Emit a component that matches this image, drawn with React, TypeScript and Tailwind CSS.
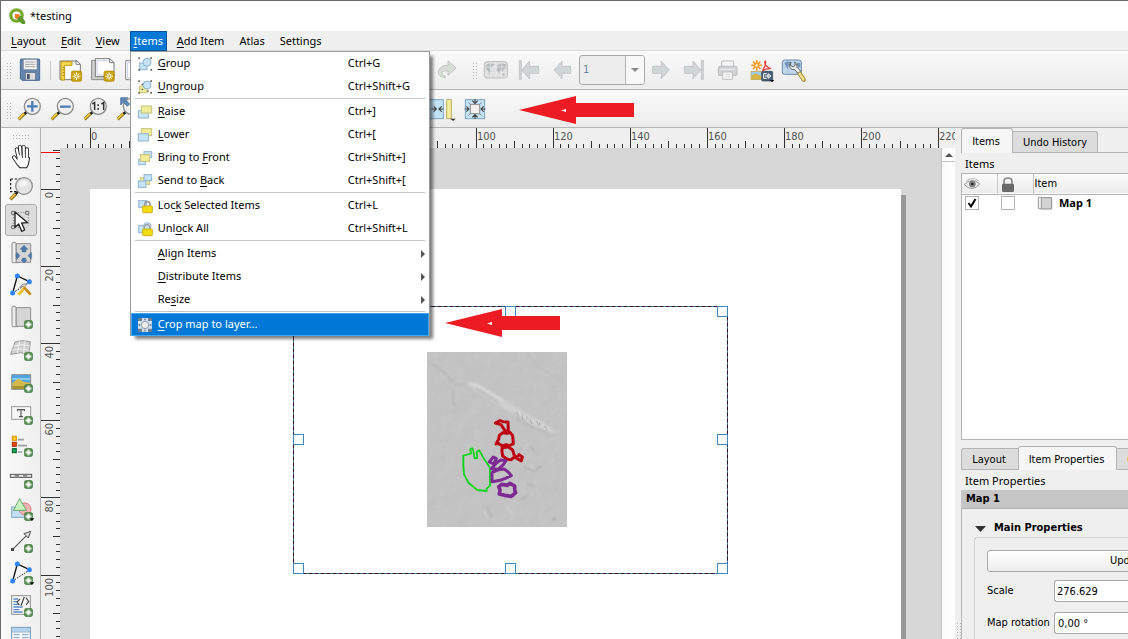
import React from "react";

type Kids = { children?: React.ReactNode };

function Icon({ box, className = "size-6", children }: { box: string; className?: string } & Kids) {
  return (
    <svg viewBox={box} className={`${className} block shrink-0 overflow-visible`} fill="none" aria-hidden="true">
      {children}
    </svg>
  );
}

/* ---------- shared glyph parts ---------- */

function Plus({ x, y }: { x: number; y: number }) {
  return (
    <g transform={`translate(${x} ${y})`}>
      <rect x="1.5" y="1.5" width="24" height="24" rx="5" fill="#5a8f55" stroke="#3f7a3d" strokeWidth="2" />
      <path d="M13.5 5v17M5 13.5h17" stroke="#fff" strokeWidth="6" />
    </g>
  );
}

function Star({ x, y }: { x: number; y: number }) {
  return (
    <g transform={`translate(${x} ${y})`}>
      <rect width="31" height="31" rx="5" fill="#c8a20a" stroke="#b08c00" strokeWidth="2" />
      <path d="M15.500 4v23M4 15.500h23M7.500 7.500l16 16M23.500 7.500l-16 16" stroke="#fff" strokeWidth="3" />
      <circle cx="15.500" cy="15.500" r="4" fill="#c8a20a" stroke="#fff" strokeWidth="2" />
    </g>
  );
}

function Lens({ cx, cy, r = 24 }: { cx: number; cy: number; r?: number }) {
  return (
    <g>
      <path d={`M${cx - 17} ${cy + 17}L${cx - 25} ${cy + 24}`} stroke="#222" strokeWidth="8" />
      <path d={`M${cx - 24} ${cy + 22}L${cx - 41} ${cy + 39}`} stroke="#8a6a10" strokeWidth="9" />
      <path d={`M${cx - 25} ${cy + 22}L${cx - 41} ${cy + 38}`} stroke="#f6cf3c" strokeWidth="5" />
      <circle cx={cx} cy={cy} r={r} fill="#f1f1f1" stroke="#8d8d8d" strokeWidth="4" />
    </g>
  );
}

function SheetScroll({ y }: { y: number }) {
  return (
    <g>
      <path d={`M48 ${y + 5}h44v56h-44z`} fill="#d6d6d6" stroke="#8f8f8f" strokeWidth="3" />
      <path d={`M36 ${y + 3}q6-5 12 0v56q2 3 6 3h-16q-2 0-2-4z`} fill="#ececec" stroke="#8f8f8f" strokeWidth="3" />
    </g>
  );
}

/* ---------- left tool box ---------- */

const fingers = "M58 90L50 58M63 90L60 51M72 90L71 51M81 92L81 58M56 102L42 82";
const palm = "M53 84h34l-3 18-5 10h-19l-9-13z";

const leftTools: { name: string; active?: boolean; icon: React.ReactNode }[] = [
  {
    name: "Pan Layout",
    icon: (
      <Icon box="27 42 72 72">
        <path d={fingers} stroke="#222" strokeWidth="12" strokeLinecap="round" />
        <path d={palm} fill="#fff" stroke="#222" strokeWidth="6" strokeLinejoin="round" />
        <path d={fingers} stroke="#fff" strokeWidth="7" strokeLinecap="round" />
        <path d={palm} fill="#fff" />
        <path d="M65.500 56v20M76 58v18M56 62l3 14" stroke="#555" strokeWidth="2.500" />
      </Icon>
    ),
  },
  {
    name: "Zoom",
    icon: (
      <Icon box="27 138 72 72">
        <path d="M32 147h40M32 147v38h20" stroke="#111" strokeWidth="3.500" strokeDasharray="7 5" />
        <path d="M54 185l-10 10" stroke="#222" strokeWidth="8" />
        <path d="M47 192l-16 16" stroke="#8a6a10" strokeWidth="10" />
        <path d="M46 192l-14 14" stroke="#f6c53c" strokeWidth="5" />
        <circle cx="72" cy="168" r="25" fill="#e2e2e2" fillOpacity=".94" stroke="#8d8d8d" strokeWidth="4" />
        <path d="M55 164q6-15 24-11 8 10-4 16-14 6-20-5z" fill="#f6f6f6" />
      </Icon>
    ),
  },
  {
    name: "Select/Move Item",
    active: true,
    icon: (
      <Icon box="27 234 72 72">
        <path d="M46 248h34M40 254v34M86 254v34M46 292h34" stroke="#777" strokeWidth="3" strokeDasharray="3 5" />
        <g fill="#ddd" stroke="#555" strokeWidth="2.500">
          <path d="M35 244h9v9h-9zM77 244h9v9h-9zM35 287h9v9h-9z" />
        </g>
        <path d="M45 246v46l11-10 9 22 9-4-9-21 18-1z" fill="#fff" stroke="#222" strokeWidth="4" strokeLinejoin="round" />
      </Icon>
    ),
  },
  {
    name: "Move Item Content",
    icon: (
      <Icon box="27 330 72 72">
        <SheetScroll y={336} />
        <path
          d="M72 346l12 12h-6v8h-12v-8h-6zM72 399l-9-9h4v-6h10v6h4zM50 366l10 11-10 11v-6h-2v-10h2zM94 366l-10 11 10 11v-6h1v-10h-1z"
          fill="#5079ad"
          stroke="#33567f"
          strokeWidth="1"
        />
      </Icon>
    ),
  },
  {
    name: "Edit Nodes Item",
    icon: (
      <Icon box="27 426 72 72">
        <path d="M38 489l14-51 36 17" stroke="#111" strokeWidth="4" />
        <path d="M38 489l46-30" stroke="#111" strokeWidth="3" strokeDasharray="5 4" />
        <circle cx="52" cy="438" r="7.500" fill="#2f84f5" />
        <circle cx="88" cy="455" r="7.500" fill="#2f84f5" />
        <circle cx="38" cy="489" r="7.500" fill="#2f84f5" />
        <path d="M60 470q8-12 22-8l-8 8q-8-2-14 4z" fill="#ddd" stroke="#888" strokeWidth="3" />
        <path d="M76 472l-21 22" stroke="#efc233" strokeWidth="9" />
        <path d="M72 472l20 22" stroke="#c98a12" strokeWidth="8" />
      </Icon>
    ),
  },
  {
    name: "Add Map",
    icon: (
      <Icon box="27 522 72 72">
        <SheetScroll y={528} />
        <Plus x={72} y={570} />
      </Icon>
    ),
  },
  {
    name: "Add 3D Map",
    icon: (
      <Icon box="27 618 72 72">
        <path d="M45 636q20-8 46-1l-4 37q-26-8-55 1z" fill="#cfcfcf" stroke="#9a9a9a" strokeWidth="3" />
        <path d="M40 648q22-8 50 0M36 661q22-8 52 0M60 632l-8 37M75 632l-4 37" stroke="#efefef" strokeWidth="3" />
        <Plus x={72} y={666} />
      </Icon>
    ),
  },
  {
    name: "Add Picture",
    icon: (
      <Icon box="27 714 72 72">
        <path d="M35 734h57v44h-57z" fill="#4fa6e6" stroke="#8f8f8f" strokeWidth="3" />
        <path d="M37 750h53v-6h-53z" fill="#8fcaf0" />
        <path d="M37 758l18-12 16 9 19 3v19h-53z" fill="#d3b94c" />
        <path d="M37 768h53v9h-53z" fill="#a8922e" />
        <Plus x={72} y={762} />
      </Icon>
    ),
  },
  {
    name: "Add Label",
    icon: (
      <Icon box="27 45 72 72">
        <rect x="35" y="65" width="57" height="38" fill="#f7f7f7" stroke="#9a9a9a" strokeWidth="3" />
        <path d="M53 79v-5h20v5M63 74v21M57 95h12" stroke="#555" strokeWidth="3.500" />
        <Plus x={72} y={93} />
      </Icon>
    ),
  },
  {
    name: "Add Legend",
    icon: (
      <Icon box="27 141 72 72">
        <rect x="37" y="154" width="12" height="12" fill="#ffd21c" stroke="#e68a00" strokeWidth="3" />
        <rect x="37" y="172" width="12" height="12" fill="#f4460c" stroke="#a82f00" strokeWidth="3" />
        <rect x="37" y="191" width="12" height="12" fill="#0fae57" stroke="#06552a" strokeWidth="3" />
        <path d="M54 164h18M54 182h27M54 201h13" stroke="#a0a0a0" strokeWidth="5" />
        <Plus x={72} y={189} />
      </Icon>
    ),
  },
  {
    name: "Add Scale Bar",
    icon: (
      <Icon box="27 237 72 72">
        <rect x="31" y="268" width="64" height="9" fill="#e6e6e6" stroke="#555" strokeWidth="3" />
        <path d="M44 272.500h13M69 272.500h13" stroke="#888" strokeWidth="6" />
        <Plus x={72} y={285} />
      </Icon>
    ),
  },
  {
    name: "Add Shape",
    icon: (
      <Icon box="27 333 72 72">
        <rect x="35" y="366" width="40" height="31" fill="#c2def3" stroke="#7fa8c8" strokeWidth="3" />
        <circle cx="75" cy="372" r="18" fill="#f6b3b3" stroke="#de8080" strokeWidth="3" />
        <path d="M59 341l20 35h-39z" fill="#c7f5c0" stroke="#69a868" strokeWidth="3" />
        <Plus x={72} y={381} />
        <path d="M89 400h14l-7 8z" fill="#111" />
      </Icon>
    ),
  },
  {
    name: "Add Arrow",
    icon: (
      <Icon box="27 429 72 72">
        <path d="M38 493l42-42" stroke="#555" strokeWidth="3.500" />
        <path d="M92 439l-7 20-13-13z" fill="#ddd" stroke="#555" strokeWidth="3" />
        <rect x="33" y="489" width="9" height="9" fill="#444" />
        <Plus x={72} y={477} />
      </Icon>
    ),
  },
  {
    name: "Add Node Item",
    icon: (
      <Icon box="27 525 72 72">
        <path d="M38 588l14-51 36 17" stroke="#111" strokeWidth="4" />
        <path d="M38 588l46-30" stroke="#111" strokeWidth="3" strokeDasharray="4 4" />
        <circle cx="52" cy="537" r="7.500" fill="#2f84f5" />
        <circle cx="88" cy="554" r="7.500" fill="#2f84f5" />
        <circle cx="38" cy="588" r="7.500" fill="#2f84f5" />
        <Plus x={72} y={573} />
        <path d="M89 592h14l-7 8z" fill="#111" />
      </Icon>
    ),
  },
  {
    name: "Add HTML",
    icon: (
      <Icon box="27 621 72 72">
        <rect x="35" y="632" width="56" height="56" fill="#f6f6f6" stroke="#8f8f8f" strokeWidth="3" />
        <path d="M40 642h14M40 650h11M40 658h17M40 666h28M40 674h18M40 681h28" stroke="#5b8cc6" strokeWidth="4" />
        <path d="M60 642l-9 9 7 9M78 638l8 12-8 10M73 636l-10 26" stroke="#444" strokeWidth="3.500" />
        <Plus x={72} y={669} />
      </Icon>
    ),
  },
  {
    name: "Add Attribute Table",
    icon: (
      <Icon box="27 717 72 72">
        <rect x="35" y="727" width="56" height="50" fill="#f4f8fc" stroke="#6d94bb" strokeWidth="3" />
        <path d="M36 729h54v11h-54z" fill="#b6d3ec" />
        <path d="M35 741h56" stroke="#6d94bb" strokeWidth="2" />
        <path d="M41 749h18M66 749h20M41 758h18M66 758h20M41 767h18M66 767h20" stroke="#7ea6cf" strokeWidth="3" />
      </Icon>
    ),
  },
];

/* ---------- menu ---------- */

const blue = { fill: "#c6e4f7", stroke: "#8fb3cd", strokeWidth: 3 };
const yellow = { fill: "#f0ec9a", stroke: "#c6c17a", strokeWidth: 3 };

function Corners({ y }: { y: number }) {
  return <path d={`M31 ${y - 20}h5v5h-5zM67 ${y - 20}h5v5h-5zM31 ${y + 15}h5v5h-5zM67 ${y + 15}h5v5h-5z`} fill="#666" />;
}

type Entry = { before?: string; key: string; after: string; shortcut?: string; icon?: React.ReactNode; sub?: boolean; hot?: boolean };

const m = "size-4";
const menuGroups: Entry[][] = [
  [
    {
      key: "G",
      after: "roup",
      shortcut: "Ctrl+G",
      icon: (
        <Icon className={m} box="27 21 48 48">
          <rect x="35" y="42" width="22" height="20" {...blue} />
          <circle cx="57" cy="40" r="12" {...blue} />
          <Corners y={45} />
        </Icon>
      ),
    },
    {
      key: "U",
      after: "ngroup",
      shortcut: "Ctrl+Shift+G",
      icon: (
        <Icon className={m} box="27 90 48 48">
          <rect x="35" y="111" width="22" height="20" {...yellow} />
          <circle cx="57" cy="108" r="12" {...blue} />
          <Corners y={114} />
          <path d="M41 104h4v4h-4zM41 119h4v4h-4zM58 124h4v4h-4z" fill="#444" />
        </Icon>
      ),
    },
  ],
  [
    {
      key: "R",
      after: "aise",
      shortcut: "Ctrl+]",
      icon: (
        <Icon className={m} box="27 165 48 48">
          <rect x="31" y="185" width="30" height="22" {...blue} />
          <rect x="40" y="171" width="31" height="21" {...yellow} />
        </Icon>
      ),
    },
    {
      key: "L",
      after: "ower",
      shortcut: "Ctrl+[",
      icon: (
        <Icon className={m} box="27 234 48 48">
          <rect x="40" y="239" width="31" height="21" {...yellow} />
          <rect x="31" y="254" width="30" height="22" {...blue} />
        </Icon>
      ),
    },
    {
      before: "Bring to ",
      key: "F",
      after: "ront",
      shortcut: "Ctrl+Shift+]",
      icon: (
        <Icon className={m} box="27 303 48 48">
          <rect x="48" y="308" width="23" height="18" {...blue} />
          <rect x="32" y="331" width="20" height="16" {...blue} />
          <rect x="37" y="317" width="28" height="20" {...yellow} />
        </Icon>
      ),
    },
    {
      before: "Send to ",
      key: "B",
      after: "ack",
      shortcut: "Ctrl+Shift+[",
      icon: (
        <Icon className={m} box="27 372 48 48">
          <rect x="37" y="386" width="28" height="20" {...yellow} />
          <rect x="48" y="377" width="23" height="18" {...blue} />
          <rect x="31" y="396" width="23" height="19" {...blue} />
        </Icon>
      ),
    },
  ],
  [
    {
      before: "Loc",
      key: "k",
      after: " Selected Items",
      shortcut: "Ctrl+L",
      icon: (
        <Icon className={m} box="27 21 48 48">
          <rect x="32" y="29" width="24" height="20" {...blue} />
          <path d="M50 46v-6q0-8 8-8t8 8v6" stroke="#999" strokeWidth="5" />
          <rect x="44" y="45" width="29" height="20" rx="2" fill="#f2dc14" stroke="#c9a900" strokeWidth="2.500" />
        </Icon>
      ),
    },
    {
      before: "Unl",
      key: "o",
      after: "ck All",
      shortcut: "Ctrl+Shift+L",
      icon: (
        <Icon className={m} box="27 90 48 48">
          <rect x="32" y="103" width="20" height="22" {...blue} />
          <circle cx="58" cy="106" r="11" {...blue} />
          <path d="M48 112q2-12 10-11t9 14" stroke="#999" strokeWidth="4" />
          <rect x="44" y="114" width="29" height="20" rx="2" fill="#f2dc14" stroke="#c9a900" strokeWidth="2.500" />
        </Icon>
      ),
    },
  ],
  [
    { key: "A", after: "lign Items", sub: true },
    { key: "D", after: "istribute Items", sub: true },
    { before: "Re", key: "s", after: "ize", sub: true },
  ],
  [
    {
      key: "C",
      after: "rop map to layer...",
      hot: true,
      icon: (
        <Icon className={m} box="27 378 48 48">
          <rect x="30" y="381" width="42" height="42" fill="#cfe3f2" />
          <path d="M30 381h12v9h-12zM60 381h12v9h-12zM30 413h12v10h-12zM60 413h12v10h-12z" fill="#6f7f8c" />
          <path d="M47 383h8l-4 6zM47 421h8l-4-6zM32 397l6 5-6 5zM70 397l-6 5 6 5z" fill="#6f7f8c" />
          <circle cx="51" cy="402" r="11" fill="#ececec" stroke="#8f9aa5" strokeWidth="3" />
        </Icon>
      ),
    },
  ],
];

function Mnemonic({ before = "", k, after }: { before?: string; k: string; after: string }) {
  return (
    <span className="whitespace-pre">
      {before}
      <u className="underline underline-offset-2">{k}</u>
      {after}
    </span>
  );
}

function ItemsMenu() {
  return (
    <div role="menu" className="absolute top-full left-0 z-20 w-[300px] border border-b-0 border-[#999] bg-white text-black shadow-[4px_4px_3px_-1px_rgba(0,0,0,0.5)]">
      {menuGroups.map((group, i) => (
        <div key={i}>
          {i > 0 && <div className="mx-1 h-0.5 border-t border-[#c4c4c4]" />}
          {group.map((e) => (
            <button
              key={e.key + e.after}
              role="menuitem"
              className={
                e.hot
                  ? "flex h-[23px] w-full items-center bg-[#0078d7] pl-1.5 text-left text-white outline-1 -outline-offset-1 outline-[#42a5f5]"
                  : "flex h-[23px] w-full items-center pl-1.5 text-left"
              }
            >
              <span className="w-[21px] shrink-0">{e.icon}</span>
              <span className="w-[190px] shrink-0">
                <Mnemonic before={e.before} k={e.key} after={e.after} />
              </span>
              <span className="grow">{e.shortcut}</span>
              {e.sub && (
                <svg viewBox="0 0 4 8" className="mr-1 h-2 w-1" aria-hidden="true">
                  <path d="M0 0l4 4-4 4z" fill="#555" />
                </svg>
              )}
            </button>
          ))}
        </div>
      ))}
    </div>
  );
}

/* ---------- toolbars ---------- */

function Grip({ wide = false }: { wide?: boolean }) {
  return (
    <div
      className={
        wide
          ? "mx-auto mt-1.5 h-1.5 w-[17px] shrink-0 bg-[radial-gradient(#b8b8b8_0.6px,transparent_1px)] bg-size-[3px_3px]"
          : "h-[17px] w-[5px] shrink-0 bg-[radial-gradient(#b8b8b8_0.6px,transparent_1px)] bg-size-[3px_3px]"
      }
    />
  );
}

function Tool({ name, children }: { name: string } & Kids) {
  return (
    <button aria-label={name} className="flex h-8 w-[33px] shrink-0 items-center pl-1">
      {children}
    </button>
  );
}

const dim = { fill: "#d2d5d6", stroke: "#bfc2c3", strokeWidth: 2.5 };

function MainToolbar() {
  return (
    <div className="flex h-[39px] shrink-0 items-center border-b border-[#b4b4b4] bg-linear-to-b from-[#fafafa] to-[#ececec] pl-[5px]">
      <Grip />
      <div className="flex pl-[3px]">
        <Tool name="Save Project">
          <Icon box="54 174 72 72">
            <path d="M61 180q0-3 3-3h52q3 0 3 3v61h-53l-5-5z" fill="#6484ad" stroke="#4c6a92" strokeWidth="3" />
            <rect x="70" y="178" width="41" height="31" fill="#f3f3f3" stroke="#7f8a99" strokeWidth="2" />
            <path d="M75 186h31M75 193h31M75 200h31" stroke="#a8a8a8" strokeWidth="3" />
            <rect x="76" y="218" width="31" height="22" fill="#dcdcdc" stroke="#56708f" strokeWidth="2" />
            <rect x="81" y="222" width="8" height="15" fill="#44566e" />
          </Icon>
        </Tool>
      </div>
      <div className="mx-[3px] h-[19px] w-px bg-[#c9c9c9]" />
      <Tool name="New Layout">
        <Icon box="174 174 72 72">
          <path d="M180 183h52l9 10v46h-61z" fill="#fff" stroke="#777" strokeWidth="3" />
          <path d="M228 181v12h13" stroke="#777" strokeWidth="3" />
          <path d="M183 185h33v11h-22v44h-11z" fill="#f7d94d" stroke="#c49a12" strokeWidth="3" />
          <path d="M188 202h5M188 210h5M188 218h5M188 226h5" stroke="#8a6a10" strokeWidth="2.500" />
          <Star x={214} y={213} />
        </Icon>
      </Tool>
      <Tool name="Duplicate Layout">
        <Icon box="273 174 72 72">
          <path d="M275 181h50v58h-50z" fill="#d0d0d0" stroke="#888" strokeWidth="3" />
          <path d="M286 176h44l12 12v42h-56z" fill="#fff" stroke="#777" strokeWidth="3" />
          <path d="M329 176v12h13" stroke="#777" strokeWidth="3" />
          <path d="M291 182h34M291 182v43h22" stroke="#a9b8dd" strokeWidth="2" />
          <Star x={312} y={213} />
        </Icon>
      </Tool>
      <Tool name="Layout Manager">
        <Icon box="372 174 72 72">
          <path d="M377 182h50v57h-50z" fill="#fff" stroke="#888" strokeWidth="3" />
          <path d="M383 188h34v45h-34z" stroke="#a9b8dd" strokeWidth="2" />
        </Icon>
      </Tool>
      <div className="w-[278px] shrink-0" />
      <Tool name="Redo">
        <Icon box="177 54 72 72">
          <path
            d="M216 62l24 22-24 22v-13h-12q-7 1-6 8 2 7 10 7v5h-6q-15-5-15-17 2-20 29-21z"
            fill="#d7dcd7"
            stroke="#bcc2bc"
            strokeWidth="2.500"
            strokeLinejoin="round"
          />
        </Icon>
      </Tool>
      <div className="mr-[3px] ml-2">
        <Grip />
      </div>
      <Tool name="Preview Atlas">
        <Icon box="324 54 72 72">
          <rect x="325" y="65" width="69" height="49" rx="8" fill="#e0e0e0" stroke="#bdbdbd" strokeWidth="3" />
          <path d="M330 74q12-6 26-2l-8 10-6 3 4 10-5 10-6-13-6-9zM364 74l14-4 12 3v10l-8 6-2 8-6-8-4 14-8-12zM380 100l7 2-3 6-6-2z" fill="#b9bcbd" />
          <path d="M343 66v47M360 66v47M377 66v47M326 81h68M326 97h68" stroke="#f2f2f2" strokeWidth="1.500" />
        </Icon>
      </Tool>
      <Tool name="First Feature">
        <Icon box="423 54 72 72">
          <path d="M430 61h6v57h-6zM437 90l24-27v16h27v21h-27v17z" {...dim} />
        </Icon>
      </Tool>
      <Tool name="Previous Feature">
        <Icon box="522 54 72 72">
          <path d="M534 90l24-26v15h26v21h-26v16z" {...dim} />
        </Icon>
      </Tool>
      <div className="grid h-[30px] w-[66px] shrink-0 grid-cols-[45px_19px] overflow-hidden rounded-[3px] border border-[#a9a9a9] bg-[#ededed]">
        <select
          aria-label="Atlas page"
          defaultValue="1"
          className="col-span-2 col-start-1 row-start-1 appearance-none pl-[3px] font-['DejaVu_Sans_Condensed','DejaVu_Sans',sans-serif] text-[11px] text-[#6d84a8]"
        >
          <option>1</option>
        </select>
        <span className="pointer-events-none col-start-2 row-start-1 flex items-center justify-center border-l border-[#b4b4b4] bg-[#f8f8f8]">
          <svg viewBox="0 0 8 4" className="h-1 w-2" aria-hidden="true">
            <path d="M0 0h8l-4 4z" fill="#8a8a8a" />
          </svg>
        </span>
      </div>
      <Tool name="Next Feature">
        <Icon box="822 54 72 72">
          <path d="M883 90l-24-26v15h-26v21h26v16z" {...dim} />
        </Icon>
      </Tool>
      <Tool name="Last Feature">
        <Icon box="921 54 72 72">
          <path d="M979 61h6v57h-6zM978 90l-24-27v16h-26v21h26v17z" {...dim} />
        </Icon>
      </Tool>
      <Tool name="Print">
        <Icon box="1018 54 72 72">
          <path d="M1038 63h35v22h-35z" fill="#f4f4f4" stroke="#bdbdbd" strokeWidth="3" />
          <rect x="1028" y="79" width="56" height="28" rx="4" fill="#d0d2d3" stroke="#bcbebf" strokeWidth="3" />
          <path d="M1033 88h46" stroke="#f0f0f0" strokeWidth="3" />
          <path d="M1041 96h29v22h-29z" fill="#f8f8f8" stroke="#bdbdbd" strokeWidth="3" />
          <path d="M1047 104h17M1047 111h17" stroke="#cfcfcf" strokeWidth="2.500" />
        </Icon>
      </Tool>
      <Tool name="Export Atlas">
        <Icon box="1117 54 72 72">
          <path d="M1143 60v32M1127 76h32M1132 65l22 22M1154 65l-22 22" stroke="#f39a1f" strokeWidth="5" />
          <circle cx="1143" cy="76" r="5" fill="#fff" stroke="#f39a1f" strokeWidth="3" />
          <path d="M1160 92q10-12 10-25-1-8-3 0 3 14 19 19-14-1-26 6z" stroke="#e9463a" strokeWidth="4" />
          <rect x="1126" y="94" width="32" height="25" fill="#9acdf0" stroke="#c9a53a" strokeWidth="2" />
          <path d="M1127 108l12-8 18 9v9h-30z" fill="#d8b544" />
          <rect x="1158" y="94" width="33" height="29" rx="3" fill="#4a6076" stroke="#2f4356" strokeWidth="2" />
          <path d="M1173 101h-9v14h9M1168 108h14M1177 101l9 7-9 7z" stroke="#fff" strokeWidth="3" />
          <path d="M1182 120h14l-7 7z" fill="#111" />
        </Icon>
      </Tool>
      <Tool name="Atlas Settings">
        <Icon box="1216 54 72 72">
          <rect x="1220" y="60" width="57" height="43" rx="7" fill="#c0d6ec" stroke="#6d8cad" strokeWidth="3" />
          <path d="M1226 68q10-6 20-2l-6 10-4 12-5-9zM1262 68l12 1v9l-6 8z" fill="#6f93bb" />
          <path d="M1221 81h56M1237 61v42M1259 61v20" stroke="#9db8d4" strokeWidth="1.500" />
          <path d="M1268 95l16 24" stroke="#a18a2c" strokeWidth="13" strokeLinecap="round" />
          <path d="M1268 96l15 22" stroke="#eedc8a" strokeWidth="8" strokeLinecap="round" />
          <path d="M1246 66q-8 8-3 17 6 8 14 6l10 11 8-7-11-11q2-12-7-16l2 10-7 5-8-5z" fill="#eee" stroke="#666" strokeWidth="3" />
        </Icon>
      </Tool>
    </div>
  );
}

function NavToolbar() {
  return (
    <div className="flex h-[38px] shrink-0 items-center border-b border-[#b4b4b4] bg-linear-to-b from-[#fafafa] to-[#ececec] pt-[3px] pl-[5px]">
      <Grip />
      <div className="flex pl-[3px]">
        <Tool name="Zoom In">
          <Icon box="54 294 72 72">
            <Lens cx={97} cy={319} />
            <path d="M97 303v32M81 319h32" stroke="#4f7db5" strokeWidth="7" />
          </Icon>
        </Tool>
        <Tool name="Zoom Out">
          <Icon box="153 294 72 72">
            <Lens cx={196} cy={319} />
            <path d="M180 320h32" stroke="#4f7db5" strokeWidth="7" />
          </Icon>
        </Tool>
        <Tool name="Zoom to 100%">
          <Icon box="252 294 72 72">
            <Lens cx={295} cy={319} />
            <path d="M277 312l7-4v22M304 312l7-4v22" stroke="#333" strokeWidth="4.500" />
            <path d="M292 313h5v5h-5zM292 324h5v5h-5z" fill="#333" />
          </Icon>
        </Tool>
        <Tool name="Zoom Full">
          <Icon box="351 294 72 72">
            <Lens cx={394} cy={319} />
            <path d="M362 293h22l-7 7 12 12-7 7-12-12-8 8z" fill="#5f88b8" stroke="#41658f" strokeWidth="2" />
          </Icon>
        </Tool>
      </div>
      <div className="w-[280px] shrink-0" />
      <Tool name="Resize">
        <Icon box="162 174 72 72">
          <rect x="150" y="179" width="52" height="57" fill="#c3e2f7" stroke="#7ea4c0" strokeWidth="3" />
          <rect x="212" y="179" width="14" height="57" fill="#f3ec9c" stroke="#b7b06a" strokeWidth="3" />
          <path d="M166 207h14M173 199l8 8-8 8M203 207h-13M197 199l-8 8 8 8" stroke="#444" strokeWidth="3.500" />
          <path d="M223 236h16l-8 7z" fill="#333" />
        </Icon>
      </Tool>
      <Tool name="Crop Map to Layer">
        <Icon box="261 174 72 72">
          <rect x="268" y="179" width="58" height="57" fill="#c3e2f7" stroke="#7ea4c0" strokeWidth="3" />
          <rect x="283" y="193" width="28" height="28" fill="#f2f0ee" stroke="#8d8d8d" strokeWidth="3" />
          <path
            d="M297 178v11M289 182l8 8 8-8M297 237v-11M289 232l8-8 8 8M266 207h12M271 199l8 8-8 8M328 207h-12M323 199l-8 8 8 8"
            stroke="#444"
            strokeWidth="3.500"
          />
          <path d="M283 193l-6-6M311 193l6-6M283 221l-6 6M311 221l6 6" stroke="#667" strokeWidth="2" />
        </Icon>
      </Tool>
    </div>
  );
}

/* ---------- rulers and canvas ---------- */

const PX = 3.855;

function HorizontalRuler() {
  const ticks = Array.from({ length: 114 }, (_, i) => (i - 3) * 2);
  return (
    <svg className="block h-5 w-full shrink-0 bg-[#efefef]" aria-hidden="true">
      {ticks.map((u) => {
        const x = Math.round(49 + u * PX);
        const major = u % 20 === 0;
        return (
          <g key={u}>
            <rect x={x} y={major ? 0 : u % 10 === 0 ? 13 : 16} width="1" height="20" fill="#333" />
            {major && (
              <text x={x + 1} y="12" fontSize="11" fill="#555" className="font-['DejaVu_Sans_Condensed','DejaVu_Sans',sans-serif]">
                {u}
              </text>
            )}
          </g>
        );
      })}
    </svg>
  );
}

function VerticalRuler() {
  const ticks = Array.from({ length: 64 }, (_, i) => (i - 5) * 2);
  return (
    <svg className="block w-[19px] shrink-0 bg-[#efefef]" aria-hidden="true">
      {ticks.map((u) => {
        const y = Math.round(41 + u * PX);
        const major = u % 20 === 0;
        return (
          <g key={u}>
            <rect x={major ? 0 : u % 10 === 0 ? 12 : 15} y={y} width="19" height="1" fill="#333" />
            {major && (
              <text
                transform={`translate(12 ${y + 3}) rotate(-90)`}
                textAnchor="end"
                fontSize="11"
                fill="#555"
                className="font-['DejaVu_Sans_Condensed','DejaVu_Sans',sans-serif]"
              >
                {u}
              </text>
            )}
          </g>
        );
      })}
      <rect x="0" y="4" width="19" height="1" fill="#f00" />
    </svg>
  );
}

function Terrain() {
  return (
    <svg viewBox="51 36 420 525" className="absolute top-[46px] left-[134px] h-[175px] w-[140px]" fill="none" aria-hidden="true">
      <filter id="relief" x="0" y="0" width="100%" height="100%">
        <feTurbulence type="fractalNoise" baseFrequency="0.02" numOctaves="3" seed="8" />
        <feDiffuseLighting surfaceScale="5" lightingColor="#ffffff">
          <feDistantLight azimuth="225" elevation="50" />
        </feDiffuseLighting>
      </filter>
      <filter id="soft">
        <feGaussianBlur stdDeviation="3" />
      </filter>
      <rect x="51" y="36" width="420" height="525" fill="#c0c0c0" />
      <rect x="51" y="36" width="420" height="525" filter="url(#relief)" opacity=".1" />
      <g filter="url(#soft)">
        <path d="M60 70q30 12 60 45t45 15" stroke="#b5b5b5" strokeWidth="4" />
        <path d="M168 130l32 2 80 46 60 36 60 32 44 34-30-4-50-22-46-32-30-12-66-42z" fill="#cfcfcf" />
        <path d="M176 130l24 4 80 46" stroke="#dadada" strokeWidth="6" />
        <path d="M200 146l66 42M320 236l50 26 44 16" stroke="#b2b2b2" strokeWidth="4" />
        <path d="M131 150q-6 22 3 46" stroke="#b4b4b4" strokeWidth="5" />
        <path d="M150 62q20 20 30 40M350 36q20 40 70 66l44 20" stroke="#b9b9b9" strokeWidth="3" />
        <path d="M330 330l24-18 20 22M340 380l30 14 24-16M350 430l24 10M230 500l14 30M330 480l26-14" stroke="#b2b2b2" strokeWidth="5" />
        <path d="M338 324l24-14M350 372l26 14M290 500l20 24M222 510l10 24" stroke="#cfcfcf" strokeWidth="5" />
        <circle cx="433" cy="537" r="5" fill="#acacac" />
      </g>
      <path d="M320 216l6 14M336 226l3 14M352 230l-4 10M360 238l6 14M380 244l4 10M390 248l-4 10M404 258l6 8" stroke="#adadad" strokeWidth="3" />
      <path d="M327 214l5 14M345 230l4 10M370 240l6 10M396 254l6 8M416 266l8 8" stroke="#dadada" strokeWidth="3" />
      <path
        d="M160 347l23-6-2-14 6-2 3 8 4 22 8-1-2-18 8-5 12 22 20 30v54l-10 9v7l-28-3-26-21-14-26-2-26z"
        stroke="#0bd41b"
        strokeWidth="5.500"
        strokeLinejoin="round"
      />
      <g stroke="#bd0012" strokeWidth="9" strokeLinejoin="round">
        <path d="M256 249l14-7 9 3 15 1 1 28-10-2-12-18zM268 286l10-8 14 2 8-3 8 10 2 24-12 6-10-3-10 4-14-8-6 2 8-14z" />
        <path d="M276 324l18-4 14 10 6 20-10 9-12-1-14-10-2-12zM318 354l9-10 10 7-3 12z" />
      </g>
      <g stroke="#7d2a93" strokeWidth="9" strokeLinejoin="round">
        <path d="M238 366l12-15 9 5-8 16zM244 386l16-18 12-8 16 2-8 12-16 14zM246 398l20-9 16-2 12 8 10 12-18 8-16 6-24 4z" />
        <path d="M266 440l10-7 16 3 8-6 14 8v12l3 8-13 11-20-3-16-4 2-12z" strokeWidth="11" />
      </g>
    </svg>
  );
}

const handles = [
  "top-0 left-[212px]",
  "top-0 right-0",
  "top-[128px] left-0",
  "top-[128px] right-0",
  "bottom-0 left-0",
  "bottom-0 left-[212px]",
  "right-0 bottom-0",
];

function Canvas() {
  return (
    <div className="relative min-w-0 grow overflow-hidden bg-[#d7d7d7]">
      <div className="absolute top-[47px] left-9 h-[800px] w-[810px] bg-[#999]" />
      <div className="absolute top-[41px] left-[30px] h-[800px] w-[811px] bg-white">
        <div className="absolute top-[117px] left-[203px] h-[268px] w-[435px]">
          <svg className="absolute inset-0 size-full" fill="none" aria-hidden="true">
            <rect x="0.500" y="0.500" width="434" height="267" stroke="#3f8fb5" />
            <rect x="0.500" y="0.500" width="434" height="267" stroke="#3a0a24" strokeDasharray="4 2" />
          </svg>
          {handles.map((h) => (
            <span key={h} className={`absolute size-[11px] border border-[#3d89bd] bg-white ${h}`} />
          ))}
          <Terrain />
        </div>
      </div>
    </div>
  );
}

function RedArrow() {
  return (
    <svg viewBox="0 0 115 28" className="block h-7 w-[115px]" aria-hidden="true">
      <path d="M0 14L57 0v7h58v14H57v7z" fill="#ed1c24" />
      <path d="M42 14.500l5-1.500v3z" fill="#fff" />
    </svg>
  );
}

/* ---------- right docks ---------- */

const tahoma = "font-['DejaVu_Sans_Condensed','DejaVu_Sans',sans-serif] text-[11px]";

function Check({ name, on = false }: { name: string; on?: boolean }) {
  return (
    <span className="grid size-3.5">
      <input
        type="checkbox"
        aria-label={name}
        defaultChecked={on}
        className="peer col-start-1 row-start-1 size-3.5 appearance-none border border-[#b4b4b4] bg-white"
      />
      <svg viewBox="0 0 14 14" className="pointer-events-none invisible col-start-1 row-start-1 peer-checked:visible" fill="none" aria-hidden="true">
        <path d="M3.500 7l2.500 3.500L10.500 3" stroke="#000" strokeWidth="2" />
      </svg>
    </span>
  );
}

function RightDocks() {
  return (
    <aside className="flex w-[167px] shrink-0 flex-col overflow-hidden bg-[#efefef]">
      <div role="tablist" className={`flex h-[25px] shrink-0 items-end border-b border-[#b4b4b4] ${tahoma}`}>
        <button role="tab" aria-selected="true" className="-mb-px h-[25px] w-[52px] shrink-0 rounded-t-[3px] border border-b-0 border-[#b4b4b4] bg-[#f6f6f6] pt-[3px] pr-0.5">
          Items
        </button>
        <button role="tab" aria-selected="false" className="h-[21px] w-[85px] shrink-0 rounded-tr-[3px] border border-b-0 border-l-0 border-[#b4b4b4] bg-[#dcdcdc] pt-[3px]">
          Undo History
        </button>
      </div>
      <h2 className="h-5 shrink-0 pl-1 leading-[22px]">Items</h2>
      <div className="h-[267px] shrink-0 border border-r-0 border-[#b4b4b4] bg-white">
        <table className="w-full table-fixed border-collapse">
          <thead>
            <tr className="h-5 border-b border-[#b4b4b4] bg-linear-to-b from-[#fbfbfb] to-[#ececec] text-left">
              <th className="w-[35px] border-r border-[#c8c8c8] pl-0.5" aria-label="Visible">
                <Icon className="size-4" box="192 168 48 48">
                  <path d="M193 194q22-24 46-2-22 26-46 2z" fill="#eee" stroke="#999" strokeWidth="3" />
                  <path d="M197 184q20-16 40-1" stroke="#aaa" strokeWidth="2.500" />
                  <circle cx="217" cy="192" r="9" fill="#888" stroke="#666" strokeWidth="2" />
                  <circle cx="217" cy="192" r="4" fill="#222" />
                </Icon>
              </th>
              <th className="w-9 border-r border-[#c8c8c8] pl-0.5" aria-label="Locked">
                <Icon className="size-4" box="300 168 48 48">
                  <path d="M312 192v-8q0-10 12-10t12 10v8" stroke="#888" strokeWidth="5" />
                  <rect x="306" y="191" width="36" height="25" rx="4" fill="#6a6a6a" />
                </Icon>
              </th>
              <th className={`pl-px font-normal ${tahoma}`}>Item</th>
            </tr>
          </thead>
          <tbody>
            <tr className="h-[17px]">
              <td className="pl-[3px]">
                <Check name="Map 1 visible" on />
              </td>
              <td className="pl-1">
                <Check name="Map 1 locked" />
              </td>
              <td>
                <span className="flex items-center gap-1.5 pl-1 leading-4 font-bold">
                  <Icon className="size-4" box="411 224 48 48">
                    <path d="M423 232h32v34h-32z" fill="#d2d2d2" stroke="#8f8f8f" strokeWidth="3" />
                    <path d="M415 231h9v34h-9z" fill="#f2f2f2" stroke="#9a9a9a" strokeWidth="3" />
                  </Icon>
                  Map 1
                </span>
              </td>
            </tr>
          </tbody>
        </table>
      </div>
      <div role="tablist" className={`mt-1.5 flex h-6 shrink-0 items-end border-b border-[#b4b4b4] ${tahoma}`}>
        <button role="tab" aria-selected="false" className="h-[21px] w-[57px] shrink-0 rounded-tl-[3px] border border-r-0 border-b-0 border-[#b4b4b4] bg-[#dcdcdc] pt-[3px] pr-0.5">
          Layout
        </button>
        <button role="tab" aria-selected="true" className="-mb-px h-6 w-[99px] shrink-0 rounded-t-[3px] border border-b-0 border-[#b4b4b4] bg-[#f6f6f6] pt-[3px] pr-0.5">
          Item Properties
        </button>
        <button role="tab" aria-selected="false" aria-label="Atlas" className="flex h-[21px] w-10 shrink-0 items-center border border-b-0 border-l-0 border-[#b4b4b4] bg-[#dcdcdc] pl-2.5">
          <span className="size-2 rounded-full bg-[#e8c65a]" />
        </button>
      </div>
      <h2 className="h-5 shrink-0 pl-1 leading-[22px]">Item Properties</h2>
      <div className="h-[18px] shrink-0 bg-[#c6c6c6] pl-[5px] font-['DejaVu_Sans_Condensed','DejaVu_Sans',sans-serif] text-[11px] leading-[18px] font-bold">Map 1</div>
      <div className={`grow border-t border-l border-[#b4b4b4] bg-[#efefef] pl-3 ${tahoma}`}>
        <button aria-expanded="true" className="flex h-7 items-end gap-2 pb-px pl-px font-bold">
          <svg viewBox="0 0 11 6" className="mb-1 h-1.5 w-[11px]" aria-hidden="true">
            <path d="M0 0h11l-5.500 6z" fill="#333" />
          </svg>
          Main Properties
        </button>
        <div className="flex h-[200px] flex-col rounded-tl-[3px] border-t border-l border-[#cfcfcf] pt-3 pl-3">
          <button className="h-[22px] w-[320px] shrink-0 rounded-[3px] border border-[#a9a9a9] bg-linear-to-b from-white to-[#ededed] pl-[122px] text-left">
            Update Preview
          </button>
          <div className="mt-2 flex h-[22px] shrink-0 items-center">
            <label htmlFor="scale" className="w-[67px] shrink-0">
              Scale
            </label>
            <input id="scale" defaultValue="276.629" className="h-[22px] w-0 grow rounded-l-[3px] border border-r-0 border-[#a9a9a9] bg-white pl-0.5" />
          </div>
          <div className="mt-2.5 flex h-[22px] shrink-0 items-center">
            <label htmlFor="rotation" className="w-[67px] shrink-0 whitespace-nowrap">
              Map rotation
            </label>
            <input id="rotation" defaultValue="0,00 °" className="h-[22px] w-0 grow rounded-l-[3px] border border-r-0 border-[#a9a9a9] bg-white pl-[3px]" />
          </div>
        </div>
      </div>
    </aside>
  );
}

/* ---------- window ---------- */

const menuItem = "h-full px-[7px]";

export default function App() {
  return (
    <div className="relative flex h-screen flex-col overflow-hidden border-t border-l border-[#6b6b6b] bg-[#efefef] font-['Noto_Sans','Open_Sans',sans-serif] text-[11px] text-black">
      <header className="flex h-[30px] shrink-0 items-center bg-white pl-2">
        <svg viewBox="0 0 16 16" className="size-4" fill="none" aria-hidden="true">
          <circle cx="7.500" cy="7.500" r="5.700" stroke="#77a92f" strokeWidth="3.200" />
          <path d="M8 8h4l4 5v3h-3l-5-5z" fill="#5c9a2c" />
          <path d="M6 6h4l1 2-3 3-2-1z" fill="#ee7d22" />
        </svg>
        <h1 className="pl-[5px]">*testing</h1>
      </header>

      <nav role="menubar" className="relative flex h-5 shrink-0 gap-px bg-[#f0f0f0] pl-[3px] shadow-[inset_0_-1px_0_#dcdcdc]">
        <button role="menuitem" className={menuItem}>
          <Mnemonic k="L" after="ayout" />
        </button>
        <button role="menuitem" className={menuItem}>
          <Mnemonic k="E" after="dit" />
        </button>
        <button role="menuitem" className={menuItem}>
          <Mnemonic k="V" after="iew" />
        </button>
        <div className="relative ml-0.5 h-full">
          <button role="menuitem" aria-expanded="true" className="h-5 w-[37px] border border-[#005499] bg-[#0078d7] text-white">
            <Mnemonic k="I" after="tems" />
          </button>
          <ItemsMenu />
        </div>
        <button role="menuitem" className="h-full pr-[7px] pl-[9px]">
          <Mnemonic k="A" after="dd Item" />
        </button>
        <button role="menuitem" className={menuItem}>
          Atlas
        </button>
        <button role="menuitem" className={menuItem}>
          Settings
        </button>
      </nav>

      <MainToolbar />
      <NavToolbar />

      <main className="flex min-h-0 grow">
        <div role="toolbar" aria-label="Toolbox" className="flex w-10 shrink-0 flex-col overflow-hidden border-r border-[#b4b4b4] bg-linear-to-r from-[#fafafa] to-[#efefef]">
          <Grip wide />
          <div className="flex flex-col items-center">
            {leftTools.map((t) => (
              <button
                key={t.name}
                aria-label={t.name}
                aria-pressed={t.active ?? false}
                className={
                  t.active
                    ? "flex size-8 items-center justify-center rounded-[3px] border border-[#acacac] bg-[#dcdcdc]"
                    : "flex size-8 items-center justify-center"
                }
              >
                {t.icon}
              </button>
            ))}
          </div>
        </div>
        <section className="flex min-w-0 grow flex-col">
          <HorizontalRuler />
          <div className="flex min-h-0 grow">
            <VerticalRuler />
            <Canvas />
            <div className="w-[14px] shrink-0 border-l border-[#c4c4c4] bg-linear-to-r from-[#fafafa] to-white">
              <button aria-label="Scroll up" className="flex h-3.5 w-full items-center justify-center border-b border-[#c4c4c4]">
                <svg viewBox="0 0 8 4" className="h-1 w-2" aria-hidden="true">
                  <path d="M0 4h8l-4-4z" fill="#555" />
                </svg>
              </button>
            </div>
          </div>
        </section>
        <div className="flex w-1.5 shrink-0 flex-col items-center justify-end">
          <Grip />
        </div>
        <RightDocks />
      </main>

      <div className="pointer-events-none absolute top-[95px] left-[518px]">
        <RedArrow />
      </div>
      <div className="pointer-events-none absolute top-[308px] left-[444px]">
        <RedArrow />
      </div>
    </div>
  );
}
